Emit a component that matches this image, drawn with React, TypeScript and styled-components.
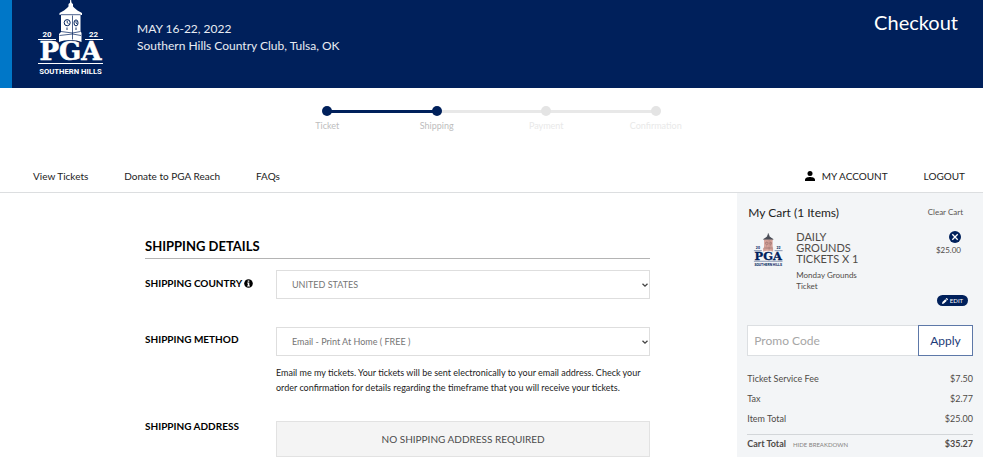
import React from "react";
import styled, { createGlobalStyle } from "styled-components";

const navy = "#00205b";

const GlobalStyle = createGlobalStyle`
  * { box-sizing: border-box; }
  body {
    margin: 0;
    background: #fff;
    color: #1c1c1c;
    font-family: Lato, "Open Sans", sans-serif;
    font-size: 10px;
  }
  button, input, select { font-family: inherit; }
  h1, h2, h3, p, dl, dd { margin: 0; }
  h1, h2, h3 { font-weight: 400; }
`;

const Header = styled.header`
  display: flex;
  align-items: flex-start;
  height: 88px;
  padding-right: 25px;
  border-left: 12px solid #0077c8;
  background: ${navy};
  color: #fff;
`;
const HeaderLogo = styled.a`
  display: block;
  width: 68px;
  height: 76px;
  margin: 0 33px 0 24px;
`;
const EventInfo = styled.p`
  flex: 1;
  padding-top: 20px;
  font-size: 12px;
  line-height: 17px;
  color: #e8ecf3;
`;
const PageTitle = styled.h1`
  padding-top: 9px;
  font-size: 20px;
  line-height: 26px;
`;

const Steps = styled.ol`
  display: flex;
  max-width: 438px;
  margin: 18px auto 0;
  padding: 0;
  list-style: none;
`;
const Step = styled.li<{ $done?: boolean; $first?: boolean }>`
  flex: 1;
  position: relative;
  text-align: center;
  font-size: 9px;
  line-height: 12px;
  color: ${(p) => (p.$done ? "#bdbdbd" : "#e9e9e9")};
  &::before {
    content: "";
    display: block;
    position: relative;
    z-index: 1;
    width: 10px;
    height: 10px;
    margin: 0 auto 4px;
    border-radius: 50%;
    background: ${(p) => (p.$done ? navy : "#e4e4e4")};
  }
  &::after {
    content: "";
    display: ${(p) => (p.$first ? "none" : "block")};
    position: absolute;
    top: 4px;
    right: 50%;
    width: 100%;
    height: 3px;
    background: ${(p) => (p.$done ? navy : "#e8e8e8")};
  }
`;

const Nav = styled.nav`
  display: flex;
  align-items: center;
  gap: 36px;
  height: 33px;
  margin-top: 28px;
  padding: 0 18px 0 33px;
  border-bottom: 1px solid #dcdee0;
`;
const NavLink = styled.a<{ $push?: boolean }>`
  display: flex;
  align-items: center;
  gap: 7px;
  margin-left: ${(p) => (p.$push ? "auto" : "0")};
  color: #222;
  font-size: 10px;
  text-decoration: none;
`;

const Columns = styled.div`
  display: grid;
  grid-template-columns: minmax(0, 3fr) minmax(0, 1fr);
`;
const Main = styled.main`
  padding: 45px 87px 0 145px;
`;
const SectionTitle = styled.h2`
  padding-bottom: 3px;
  border-bottom: 1px solid #b4b4b4;
  color: #000;
  font-size: 13px;
  font-weight: 700;
  line-height: 17px;
`;
const Field = styled.div<{ $top: number }>`
  display: grid;
  grid-template-columns: 131px 1fr;
  margin-top: ${(p) => p.$top}px;
`;
const FieldLabel = styled.label<{ $top: number }>`
  padding-top: ${(p) => p.$top}px;
  color: #000;
  font-size: 10px;
  font-weight: 700;
  line-height: 10px;
  svg { vertical-align: -1px; }
`;
const SelectBox = styled.div`
  display: grid;
  align-items: center;
  justify-items: end;
  & > * { grid-area: 1 / 1; }
  svg { margin-right: 1px; pointer-events: none; }
`;
const Select = styled.select`
  appearance: none;
  width: 100%;
  height: 29px;
  padding: 0 15px;
  border: 1px solid #dedede;
  border-radius: 0;
  background: #fff;
  color: #757575;
  font-size: 9px;
`;
const Help = styled.p`
  padding-top: 9px;
  font-size: 9px;
  line-height: 15px;
`;
const NoAddress = styled.output`
  display: block;
  height: 36px;
  border: 1px solid #e2e2e2;
  background: #f4f4f4;
  color: #4c4c4c;
  font-size: 10px;
  line-height: 34px;
  text-align: center;
`;

const Cart = styled.aside`
  padding: 9px 10px 4px;
  background: #f3f5f7;
  color: #4f4b47;
`;
const CartHead = styled.div`
  display: flex;
  align-items: center;
  justify-content: space-between;
  height: 20px;
  padding: 0 10px 0 1px;
`;
const CartTitle = styled.h2`
  color: #222;
  font-size: 12px;
`;
const ClearButton = styled.button`
  padding: 0;
  border: 0;
  background: none;
  color: #5a5652;
  font-size: 8px;
`;
const CartItem = styled.article`
  display: grid;
  grid-template-columns: 43px 66px 1fr;
  padding: 9px 5px 0 6px;
`;
const Thumb = styled.div`
  width: 30px;
  height: 36px;
  padding-top: 2px;
`;
const ItemName = styled.h3`
  font-size: 11px;
  line-height: 11px;
`;
const ItemType = styled.p`
  padding-top: 6px;
  font-size: 8px;
  line-height: 11px;
`;
const ItemSide = styled.div`
  display: flex;
  flex-direction: column;
  align-items: flex-end;
  font-size: 8px;
  line-height: 12px;
`;
const RemoveButton = styled.button`
  display: grid;
  place-items: center;
  width: 12px;
  height: 12px;
  margin-right: 7px;
  padding: 0;
  border: 0;
  border-radius: 50%;
  background: ${navy};
  color: #fff;
`;
const Price = styled.span`
  padding: 1px 7px 0 0;
`;
const EditButton = styled.button`
  display: flex;
  align-items: center;
  justify-content: center;
  gap: 2px;
  width: 31px;
  height: 11px;
  margin-top: 39px;
  padding: 0;
  border: 0;
  border-radius: 6px;
  background: ${navy};
  color: #fff;
  font-size: 6px;
`;
const Promo = styled.form`
  display: flex;
  height: 31px;
  margin-top: 19px;
`;
const PromoInput = styled.input`
  flex: 1;
  min-width: 0;
  padding: 0 6px;
  border: 1px solid #dcdfe2;
  border-right: 0;
  border-radius: 0;
  background: #fff;
  font-size: 12px;
  &::placeholder { color: #a6a6a6; }
`;
const ApplyButton = styled.button`
  width: 55px;
  padding: 0;
  border: 1px solid #5d78a8;
  background: #fff;
  color: #1d3b78;
  font-size: 12px;
`;
const Totals = styled.dl`
  padding-top: 12px;
`;
const TotalRow = styled.div<{ $grand?: boolean }>`
  display: flex;
  align-items: center;
  height: ${(p) => (p.$grand ? 18 : 20)}px;
  margin-top: ${(p) => (p.$grand ? 6 : 0)}px;
  border-top: ${(p) => (p.$grand ? "1px solid #d3d6d9" : "0")};
  font-size: 9px;
  font-weight: ${(p) => (p.$grand ? 700 : 400)};
  dd { margin-left: auto; }
`;
const BreakdownButton = styled.button`
  margin-left: 7px;
  padding: 0;
  border: 0;
  background: none;
  color: #85827f;
  font-size: 6px;
`;

type LogoProps = { ink: string; tower: string; roof: string; paper: string };

function Logo({ ink, tower, roof, paper }: LogoProps) {
  return (
    <svg viewBox="0 0 68 76" width="100%" height="100%" role="img" aria-label="2022 PGA Southern Hills">
      <path d="M34.700-3v8" stroke={roof} strokeWidth="1" />
      <path d="M34.700 0l.9 3 1.400 1v2.500l1.500 1.500 3 2.500 4.500 2.500v2H23.500v-2l4.500-2.500 3-2.500 1.500-1.500V4l1.300-1z" fill={roof} />
      <path d="M25 15h19.500v16l1 2v9c-5-2.700-17-2.700-22.500 0v-8l2-2z" fill={tower} />
      <path d="M24.500 14.700h20M36.500 15.500v24M25 31.500l11.500 1.500 8-1.500M23.500 35.500L36.500 34l8.500 1.500" fill="none" stroke={paper} strokeWidth=".7" />
      <g fill={tower} stroke={paper} strokeWidth="1">
        <ellipse cx="31.200" cy="22.700" rx="3" ry="3.100" />
        <ellipse cx="40" cy="22.900" rx="2" ry="3" />
      </g>
      <path d="M31.200 20.700v2l1.300 1M40 20.900v2l.8 1M31 27.500v2.500M40 27.500v2.500" fill="none" stroke={paper} strokeWidth=".9" />
      <path d="M2 39.500h18M49 39.500h18M2 63.500h65" stroke={ink} strokeWidth="1" />
      <g fill={ink} fontFamily="Roboto, sans-serif" fontWeight="700">
        <text x="6.500" y="36.500" fontSize="8">20</text>
        <text x="53" y="36.500" fontSize="8">22</text>
        <text x="34.500" y="73.500" fontSize="7.700" textAnchor="middle">SOUTHERN HILLS</text>
      </g>
      <text x="34.500" y="60.300" fontSize="26" fontWeight="700" textAnchor="middle" fill={ink} stroke={ink} strokeWidth=".6" fontFamily="'DejaVu Serif', serif">PGA</text>
    </svg>
  );
}

const Chevron = () => (
  <svg width="8" height="8" viewBox="0 0 8 8" fill="none" stroke="#444" strokeWidth="1.300">
    <path d="M1.500 2.700L4 5.200l2.500-2.500" />
  </svg>
);

const fees = [
  ["Ticket Service Fee", "$7.50"],
  ["Tax", "$2.77"],
  ["Item Total", "$25.00"],
];

export default function App() {
  return (
    <>
      <GlobalStyle />
      <Header>
        <HeaderLogo href="#home">
          <Logo ink="#fff" tower="#fff" roof="#fff" paper={navy} />
        </HeaderLogo>
        <EventInfo>
          MAY 16-22, 2022
          <br />
          Southern Hills Country Club, Tulsa, OK
        </EventInfo>
        <PageTitle>Checkout</PageTitle>
      </Header>

      <Steps>
        <Step $done $first>Ticket</Step>
        <Step $done>Shipping</Step>
        <Step>Payment</Step>
        <Step>Confirmation</Step>
      </Steps>

      <Nav>
        <NavLink href="#tickets">View Tickets</NavLink>
        <NavLink href="#donate">Donate to PGA Reach</NavLink>
        <NavLink href="#faqs">FAQs</NavLink>
        <NavLink href="#account" $push>
          <svg width="10" height="10" viewBox="0 0 10 10" fill="#000">
            <circle cx="5" cy="2.500" r="2.500" />
            <path d="M0 10V8.500C0 6.800 3 6 5 6s5 .8 5 2.500V10z" />
          </svg>
          MY ACCOUNT
        </NavLink>
        <NavLink href="#logout">LOGOUT</NavLink>
      </Nav>

      <Columns>
        <Main>
          <SectionTitle>SHIPPING DETAILS</SectionTitle>
          <Field $top={11}>
            <FieldLabel htmlFor="country" $top={8}>
              SHIPPING COUNTRY{" "}
              <svg width="9" height="9" viewBox="0 0 9 9">
                <circle cx="4.500" cy="4.500" r="4.300" fill="#000" />
                <path d="M3.700 1.500h1.600v1.300H3.700zM3.200 3.600h2.100v2.900h.6v1H3.200v-1h.6V4.600h-.6z" fill="#fff" />
              </svg>
            </FieldLabel>
            <SelectBox>
              <Select id="country">
                <option>UNITED STATES</option>
              </Select>
              <Chevron />
            </SelectBox>
          </Field>
          <Field $top={28}>
            <FieldLabel htmlFor="method" $top={7}>SHIPPING METHOD</FieldLabel>
            <div>
              <SelectBox>
                <Select id="method">
                  <option>Email - Print At Home ( FREE )</option>
                </Select>
                <Chevron />
              </SelectBox>
              <Help>
                Email me my tickets. Your tickets will be sent electronically to your email address. Check your
                order confirmation for details regarding the timeframe that you will receive your tickets.
              </Help>
            </div>
          </Field>
          <Field $top={26}>
            <FieldLabel htmlFor="address" $top={0}>SHIPPING ADDRESS</FieldLabel>
            <NoAddress id="address">NO SHIPPING ADDRESS REQUIRED</NoAddress>
          </Field>
        </Main>

        <Cart>
          <CartHead>
            <CartTitle>My Cart (1 Items)</CartTitle>
            <ClearButton>Clear Cart</ClearButton>
          </CartHead>
          <CartItem>
            <Thumb>
              <Logo ink={navy} tower="#d9a59b" roof="#4a4d57" paper="#7c5a5a" />
            </Thumb>
            <div>
              <ItemName>DAILY GROUNDS TICKETS X 1</ItemName>
              <ItemType>Monday Grounds Ticket</ItemType>
            </div>
            <ItemSide>
              <RemoveButton aria-label="Remove item">
                <svg width="8" height="8" viewBox="0 0 8 8" stroke="#fff" strokeWidth="1.300">
                  <path d="M1.300 1.300l5.400 5.400M6.700 1.300L1.300 6.700" />
                </svg>
              </RemoveButton>
              <Price>$25.00</Price>
              <EditButton>
                <svg width="6" height="6" viewBox="0 0 6 6" fill="#fff">
                  <path d="M0 6l.4-1.900L3.300 1.200 4.800 2.700 1.900 5.600zM3.700.8l.6-.6q.3-.3.700 0l.8.8q.3.300 0 .7l-.6.600z" />
                </svg>
                EDIT
              </EditButton>
            </ItemSide>
          </CartItem>
          <Promo onSubmit={(e) => e.preventDefault()}>
            <PromoInput aria-label="Promo Code" placeholder="Promo Code" />
            <ApplyButton type="submit">Apply</ApplyButton>
          </Promo>
          <Totals>
            {fees.map(([name, amount]) => (
              <TotalRow key={name}>
                <dt>{name}</dt>
                <dd>{amount}</dd>
              </TotalRow>
            ))}
            <TotalRow $grand>
              <dt>
                Cart Total
                <BreakdownButton>HIDE BREAKDOWN</BreakdownButton>
              </dt>
              <dd>$35.27</dd>
            </TotalRow>
          </Totals>
        </Cart>
      </Columns>
    </>
  );
}
